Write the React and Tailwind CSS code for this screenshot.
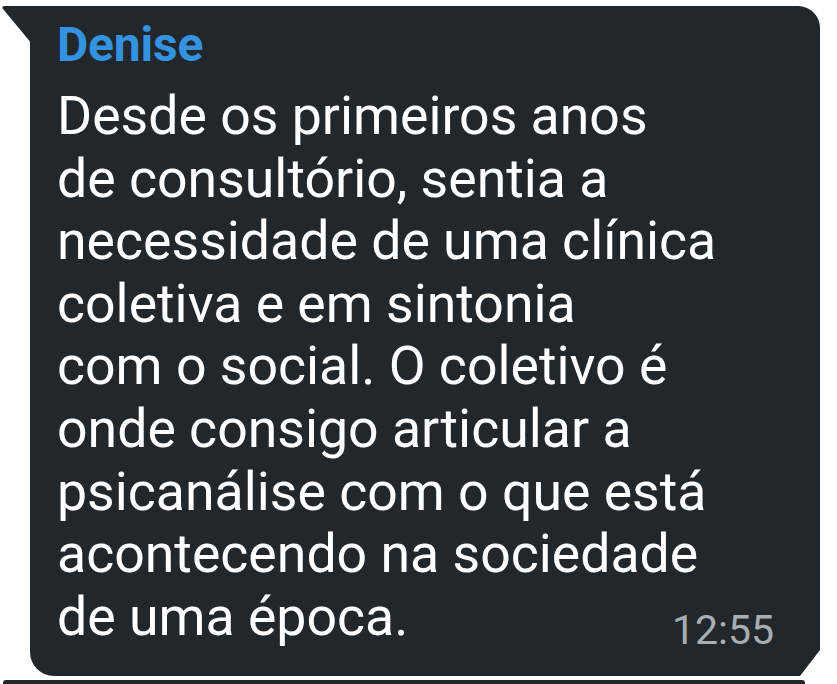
import React from "react";

const lines = [
  "Desde os primeiros anos",
  "de consultório, sentia a",
  "necessidade de uma clínica",
  "coletiva e em sintonia",
  "com o social. O coletivo é",
  "onde consigo articular a",
  "psicanálise com o que está",
  "acontecendo na sociedade",
];

export default function App() {
  return (
    <div
      className="w-[837px] h-[684px] bg-white overflow-hidden flex flex-col"
      style={{ fontFamily: "Roboto, 'Liberation Sans', sans-serif" }}
    >
      <div className="relative ml-[30px] mt-[6px] w-[790px] h-[670px]">
        {/* tail */}
        <svg
          className="absolute left-[-29px] top-0"
          width="31"
          height="40"
          viewBox="0 0 31 40"
        >
          <path d="M31 0 L4 0 Q0 0 2 3 L31 38 Z" fill="#22272b" />
        </svg>
        <div className="h-full bg-[#22272b] rounded-tr-[22px] rounded-bl-[24px] [clip-path:polygon(0_0,100%_0,100%_calc(100%-26px),calc(100%-20px)_100%,0_100%)] pl-[27px] pr-[46px] pt-[15px] flex flex-col">
          <div className="text-[48px] leading-[48px] font-bold text-[#3393e0] tracking-[-0.2px]">
            Denise
          </div>
          <div className="mt-[16px] text-[53.6px] leading-[62.6px] text-white">
            {lines.map((l) => (
              <div key={l}>{l}</div>
            ))}
            <div className="flex justify-between items-baseline">
              <span>de uma época.</span>
              <span className="text-[41px] text-[#a8adb2] relative top-[9px]">12:55</span>
            </div>
          </div>
        </div>
      </div>
      <div className="ml-[3px] mt-[4px] w-[802px] h-[4px] bg-[#22272b] rounded-t-[3px]" />
    </div>
  );
}
